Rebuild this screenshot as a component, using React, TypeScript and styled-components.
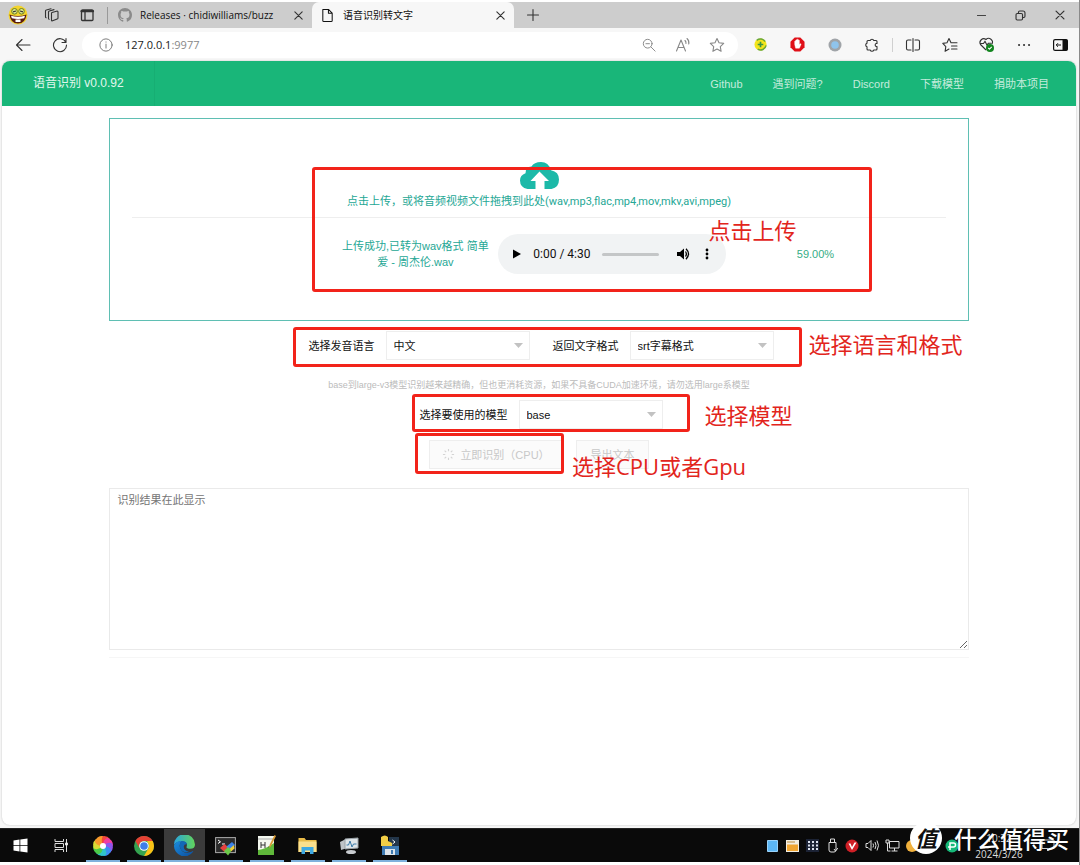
import React from "react";
import styled, { createGlobalStyle, css } from "styled-components";

const CJK = `"Noto Sans CJK SC", sans-serif`;
const RED = "#f2231a";

const GlobalStyle = createGlobalStyle`
  * { box-sizing: border-box; }
  body { margin: 0; background: #fff; font-family: "Liberation Sans", ${CJK}; font-size: 11px; line-height: 16px; color: #222; }
  button { font: inherit; color: inherit; background: none; border: 0; padding: 0; }
  svg { display: block; flex: none; }
`;

/* ---------- window ---------- */
const Window = styled.div`
  min-height: 100vh;
  display: flex;
  flex-direction: column;
  border-right: 1px solid #8a8a8a;
  padding: 2px 0 3px;
`;
const chromeFont = css`
  font-family: "Open Sans", ${CJK};
`;
const TabBar = styled.div`
  ${chromeFont}
  height: 26px;
  display: flex;
  align-items: center;
  background: #cdcdcd;
  font-size: 10px;
`;
const IconButton = styled.button<{ $w?: number; $color?: string }>`
  width: ${(p) => p.$w ?? 37}px;
  height: 26px;
  flex: none;
  display: flex;
  align-items: center;
  justify-content: center;
  color: ${(p) => p.$color ?? "#333"};
`;
const Separator = styled.span<{ $light?: boolean }>`
  width: 1px;
  height: ${(p) => (p.$light ? 14 : 17)}px;
  flex: none;
  background: ${(p) => (p.$light ? "#d0d0d0" : "#999")};
`;
const Tab = styled.div<{ $active?: boolean }>`
  position: relative;
  width: 202px;
  height: 26px;
  padding: 0 5px 0 8px;
  display: flex;
  align-items: center;
  gap: 8px;
  color: #111;
  border-radius: 7px 7px 0 0;
  background: ${(p) => (p.$active ? "#f7f7f7" : "transparent")};
`;
const TabTitle = styled.span`
  flex: 1;
  white-space: nowrap;
`;
const Spacer = styled.span`
  flex: 1;
`;
const Toolbar = styled.div`
  ${chromeFont}
  height: 33px;
  display: flex;
  align-items: center;
  padding: 0 0 0 4px;
  background: #f7f7f7;
`;
const AddressBar = styled.div`
  flex: 1;
  height: 26px;
  margin-left: 4px;
  padding: 0 4px 0 17px;
  display: flex;
  align-items: center;
  background: #fff;
  border-radius: 13px;
  color: #777;
`;
const AddressText = styled.div`
  flex: 1;
  margin-left: 12px;
  font-size: 11px;
  color: #888;
  b {
    font-weight: 400;
    color: #222;
  }
`;

/* ---------- page ---------- */
const Viewport = styled.div`
  flex: 1;
  display: flex;
  flex-direction: column;
  background: #f7f7f7;
  padding: 0 3px 3px 2px;
`;
const Page = styled.div`
  flex: 1;
  display: flex;
  flex-direction: column;
  background: #fff;
  border-radius: 8px;
  overflow: hidden;
  box-shadow: 0 0 2px #bbb;
`;
const Header = styled.header`
  height: 45px;
  display: flex;
  align-items: center;
  background: #19b679;
  color: rgba(255, 255, 255, 0.75);
`;
const Brand = styled.a`
  width: 153px;
  padding-left: 31px;
  line-height: 45px;
  font-size: 12px;
  color: #e2f6ee;
  text-decoration: none;
  border-right: 1px solid #17ae73;
`;
const Nav = styled.nav`
  margin-left: auto;
  padding-right: 27px;
  display: flex;
  gap: 30px;
  a {
    color: inherit;
    text-decoration: none;
  }
`;
const Content = styled.main`
  width: 80%;
  margin: 12px auto 0;
  display: flex;
  flex-direction: column;
  align-items: center;
`;
const UploadBox = styled.section`
  position: relative;
  width: 100%;
  min-height: 203px;
  padding: 43px 22px 0;
  border: 1px solid #5fbfb3;
  color: #25a795;
  display: flex;
  flex-direction: column;
  align-items: center;
`;
const UploadPrompt = styled.p`
  margin: 5px 0 7px;
  font-family: Roboto, ${CJK};
`;
const Divider = styled.hr`
  width: 100%;
  margin: 0;
  border: 0;
  border-top: 1px solid #eee;
`;
const UploadStatus = styled.div`
  width: 100%;
  margin-top: 16px;
  display: grid;
  grid-template-columns: minmax(0, 45fr) minmax(0, 28fr) minmax(0, 22fr) minmax(0, 5fr);
  align-items: center;
`;
const StatusMessage = styled.p`
  width: 150px;
  margin: 0 8px 0 0;
  justify-self: end;
  text-align: center;
`;
const Percent = styled.span`
  justify-self: center;
  color: #35ad85;
`;
const Player = styled.div`
  height: 40px;
  padding: 0 7px 0 13px;
  display: flex;
  align-items: center;
  border-radius: 20px;
  background: #f1f3f4;
  color: #111;
  font-family: Roboto, sans-serif;
  font-size: 12px;
`;
const PlayerTime = styled.span`
  margin: 0 11px 0 10px;
  white-space: nowrap;
`;
const Seek = styled.input`
  flex: 1;
  min-width: 0;
  height: 3px;
  margin: 0 12px 0 0;
  appearance: none;
  border-radius: 2px;
  background: #c4c6c7;
  &::-webkit-slider-thumb {
    appearance: none;
    width: 0;
    height: 0;
  }
`;
const FormRow = styled.div<{ $top: number; $gap?: number }>`
  position: relative;
  margin-top: ${(p) => p.$top}px;
  display: flex;
  align-items: center;
  gap: ${(p) => p.$gap ?? 23}px;
`;
const SelectRow = styled(FormRow)`
  padding-left: 4px;
`;
const Field = styled.label`
  display: flex;
  align-items: center;
  gap: 11px;
  color: #111;
  white-space: nowrap;
`;
const SelectWrap = styled.span`
  display: flex;
  align-items: center;
  width: 144px;
  height: 29px;
  border: 1px solid #eee;
  padding-right: 6px;
  background: #fff;
`;
const Select = styled.select`
  flex: 1;
  height: 27px;
  padding: 0 7px;
  appearance: none;
  border: 0;
  background: transparent;
  color: #111;
  font: inherit;
`;
const Hint = styled.p`
  margin: 17px 0 0;
  font-size: 9px;
  color: #bbb;
`;
const ActionButton = styled.button<{ $w: number }>`
  width: ${(p) => p.$w}px;
  height: 29px;
  display: flex;
  align-items: center;
  justify-content: center;
  gap: 5px;
  background: #fbfbfb;
  border: 1px solid #eee;
  color: #c8c8c8;
`;
const Result = styled.textarea`
  display: block;
  width: 100%;
  height: 162px;
  margin-top: 19px;
  padding: 3px 7px;
  border: 1px solid #eaeaea;
  font: inherit;
  resize: vertical;
  &::placeholder {
    color: #757575;
  }
`;
const Footline = styled(Divider)`
  margin-top: 7px;
  border-color: #f6f6f6;
`;

/* ---------- annotations over the page ---------- */
const Mark = styled.span<{ $x: number; $y: number; $w: number; $h: number }>`
  position: absolute;
  left: ${(p) => p.$x}px;
  top: ${(p) => p.$y}px;
  width: ${(p) => p.$w}px;
  height: ${(p) => p.$h}px;
  border: 3px solid ${RED};
  border-radius: 3px;
  pointer-events: none;
`;
const Note = styled.span<{ $x: number; $y: number }>`
  position: absolute;
  left: ${(p) => p.$x}px;
  top: ${(p) => p.$y}px;
  font: 22px/28px "Open Sans", ${CJK};
  color: #e2251c;
  white-space: nowrap;
  pointer-events: none;
`;

/* ---------- taskbar ---------- */
const Taskbar = styled.footer`
  position: relative;
  height: 34px;
  display: flex;
  background: #0a0a0a;
  border-top: 1px solid #222;
  color: #ddd;
`;
const TaskButton = styled.button<{ $running?: boolean; $active?: boolean }>`
  width: 41px;
  height: 33px;
  display: flex;
  align-items: center;
  justify-content: center;
  background: ${(p) =>
    p.$running
      ? `linear-gradient(#7fb2dd, #7fb2dd) center bottom / ${p.$active ? 41 : 34}px 2px no-repeat`
      : "none"};
  background-color: ${(p) => (p.$active ? "#3b3b3b" : "transparent")};
`;
const Tray = styled.div`
  margin-left: auto;
  display: flex;
  align-items: center;
`;
const TrayItem = styled.span`
  width: 20px;
  display: flex;
  justify-content: center;
`;
const Clock = styled.time`
  ${chromeFont}
  width: 74px;
  text-align: center;
  font-size: 10px;
`;
const ClockLine = styled.span`
  display: block;
  line-height: 16px;
`;
const NoticeSlot = styled.span`
  width: 43px;
  padding-left: 5px;
`;
const Watermark = styled.div`
  position: absolute;
  right: 10px;
  top: -7px;
  display: flex;
  align-items: center;
  gap: 12px;
  color: #fff;
  font: 500 23px/32px ${CJK};
`;
const Seal = styled.span`
  width: 32px;
  height: 32px;
  border-radius: 50%;
  background: #fff;
  color: #111;
  text-align: center;
  font-size: 22px;
  font-weight: 700;
  font-style: italic;
  line-height: 31px;
`;

/* ---------- icons ---------- */
type LineProps = { size?: number; sw?: number; children: React.ReactNode };
const Line = ({ size = 16, sw = 1.1, children }: LineProps) => (
  <svg width={size} height={size} viewBox="0 0 16 16" fill="none" stroke="currentColor" strokeWidth={sw} strokeLinecap="round" strokeLinejoin="round">
    {children}
  </svg>
);
const CloseIcon = ({ size = 13 }: { size?: number }) => <Line size={size} sw={1.4}><path d="M3.5 3.5l9 9M12.5 3.5l-9 9" /></Line>;
const PlusIcon = () => <Line><path d="M8 2.5v11M2.5 8h11" /></Line>;
const SmileIcon = () => (
  <svg width="20" height="20" viewBox="0 0 20 20">
    <circle cx="10" cy="10" r="9.5" fill="#f3d42c" />
    <g fill="#dfe98a" stroke="#6b7d1c" strokeWidth="1">
      <circle cx="6.5" cy="6.3" r="2.800" /><circle cx="13.5" cy="6.3" r="2.800" />
    </g>
    <path d="M5 6.800l3-.8M12 6l3 .8" stroke="#333" strokeWidth="1.200" />
    <path d="M1.500 9.500q8.500 3 17 0q-1 9-8.500 9t-8.500-9z" fill="#5a1c10" />
    <path d="M3 10.800q7 2 14 0l-.8 2.400q-6.200 1.500-12.400 0z" fill="#fff" />
    <path d="M7.500 14.500h5v2.500h-5z" fill="#fff" />
  </svg>
);
const WorkspacesIcon = () => (
  <Line>
    <path d="M8 5.500l4.500-1.300q1.500-.2 1.500.8v6q0 .8-.8 1L8.500 13.800q-1 .2-1-.8V6.300q0-.6.5-.8z" />
    <path d="M5.200 12.300q-.7 0-.7-.9V5q0-.8.8-1L10 2.600" />
    <path d="M2.200 10.800q-.7 0-.7-.9V4q0-.8.8-1L7 1.700" />
  </Line>
);
const TabActionsIcon = () => (
  <Line sw={1.3}>
    <rect x="2.500" y="3" width="11.500" height="10.500" rx="1" /><path d="M2.500 4.200h11.500" strokeWidth="2.200" /><path d="M6 5v8" />
  </Line>
);
const GithubIcon = () => (
  <svg width="14" height="14" viewBox="0 0 16 16" fill="#8b8b8b">
    <path d="M8 0C3.580 0 0 3.580 0 8c0 3.540 2.290 6.530 5.470 7.590.4.070.550-.170.550-.380 0-.190-.010-.820-.010-1.490-2.010.370-2.530-.490-2.690-.940-.090-.230-.480-.940-.820-1.130-.280-.150-.680-.520-.010-.530.630-.010 1.080.580 1.230.820.720 1.210 1.870.870 2.330.660.070-.520.280-.870.510-1.070-1.780-.200-3.640-.890-3.640-3.950 0-.870.310-1.590.820-2.150-.080-.200-.360-1.020.080-2.120 0 0 .670-.210 2.200.820.640-.180 1.320-.270 2-.270s1.360.090 2 .270c1.530-1.040 2.200-.820 2.200-.820.440 1.100.160 1.920.080 2.120.510.560.820 1.270.820 2.150 0 3.070-1.870 3.750-3.650 3.950.290.250.540.730.540 1.480 0 1.070-.010 1.930-.010 2.200 0 .210.150.460.550.380A8.013 8.013 0 0 0 16 8c0-4.420-3.580-8-8-8z" />
  </svg>
);
const PageIcon = () => <Line size={15}><path d="M3 1.500h6l4 4v8q0 1-1 1H4q-1 0-1-1zM9 1.500v4h4" /></Line>;
const MinimizeIcon = () => <Line size={13}><path d="M3 8h10" /></Line>;
const RestoreIcon = () => (
  <Line size={13} sw={1.4}><rect x="2.500" y="5.500" width="8" height="8" rx="1.500" /><path d="M5.500 5.200V4q0-1.500 1.500-1.500h4q2.500 0 2.500 2.500v4q0 1.500-1.500 1.500h-1.300" /></Line>
);
const BackIcon = () => <Line><path d="M15 8H2M7 2.500L1.500 8 7 13.500" /></Line>;
const ReloadIcon = () => <Line><path d="M13.800 5.200A6.500 6.500 0 1 0 14.500 8M14 1.500v4h-4" /></Line>;
const InfoIcon = () => <Line size={14}><circle cx="8" cy="8" r="7" /><path d="M8 7v4.500M8 4.500v.2" /></Line>;
const ZoomOutIcon = () => <Line size={14}><circle cx="6.500" cy="6.500" r="5" /><path d="M10.300 10.300l4.700 4.700M4.500 6.500h4" /></Line>;
const ReadAloudIcon = () => (
  <Line><path d="M1.500 14L6 3l4.500 11M3 10.500h6" /><path d="M10 3.500q1.200 1.200 1 3M12 1.500q2.300 2 1.800 5.500" /></Line>
);
const STAR = "M8 1.500l2 4.300 4.700.6-3.400 3.200.8 4.700L8 12l-4.100 2.300.8-4.700L1.300 6.400 6 5.800z";
const StarIcon = () => <Line><path d={STAR} /></Line>;
const YellowExtIcon = () => (
  <svg width="13" height="13" viewBox="0 0 14 14">
    <circle cx="7" cy="7" r="6.500" fill="#f4e51b" />
    <path d="M3 2.500A6 6 0 0 1 12 4M13 8a6 6 0 0 1-9 4" fill="none" stroke="#69a83a" strokeWidth="1.600" />
    <path d="M7 4v6M4 7h6" stroke="#3c9446" strokeWidth="1.800" />
  </svg>
);
const BlockerIcon = () => (
  <svg width="15" height="15" viewBox="0 0 16 16">
    <path d="M5 0.500h6L15.500 5v6L11 15.500H5L.5 11V5z" fill="#e01018" />
    <path d="M5 8V4.500q.7-.8 1.200 0V3.200q.7-.8 1.300 0v-.5q.7-.8 1.300 0v.8q.7-.8 1.200 0V8l1-.8q1-.2.800.7L10 12H6z" fill="#fff" stroke="#fff" strokeWidth=".4" />
  </svg>
);
const DotExtIcon = () => (
  <svg width="14" height="14" viewBox="0 0 14 14"><circle cx="7" cy="7" r="6.500" fill="#a0a4a8" /><circle cx="7" cy="7" r="3.800" fill="#8fc4ec" /></svg>
);
const PuzzleIcon = () => (
  <Line><path d="M4 3.500h2.200a1.900 1.900 0 0 1 3.600 0H12q1 0 1 1v2h-.8a1.600 1.600 0 0 0 0 3h.8v2.500q0 1-1 1H9.800a1.900 1.900 0 0 1-3.600 0H4q-1 0-1-1V9.800a1.900 1.900 0 0 1 0-3.600V4.500q0-1 1-1z" /></Line>
);
const SplitIcon = () => (
  <Line><path d="M6 3H3Q1.500 3 1.500 4.500v7Q1.500 13 3 13h3M10 3h3q1.500 0 1.500 1.500v7q0 1.500-1.500 1.500h-3M8 1.500v13" /></Line>
);
const FavoritesIcon = () => (
  <Line><path d="M9 5.800L7 1.500 5 5.800.8 6.400l3 3.200-.7 4.700L7 12M9 5.800h6M9.500 9H15M9.500 12H15" /></Line>
);
const HealthIcon = () => (
  <svg width="17" height="17" viewBox="0 0 17 17" fill="none" stroke="#333" strokeWidth="1.100" strokeLinejoin="round">
    <path d="M8 14L2.500 8.500a3.800 3.800 0 0 1 5.500-5 3.800 3.800 0 0 1 6 4.500M2.500 7.500h3l1.500-2.300 2 4 1.500-2h3" />
    <circle cx="12" cy="12" r="4" fill="#13851f" stroke="none" /><path d="M10.300 12l1.200 1.200 2.200-2.300" stroke="#fff" />
  </svg>
);
const MoreIcon = () => <Line><path d="M3 8h.1M8 8h.1M13 8h.1" strokeWidth="2" /></Line>;
const SidebarIcon = () => (
  <svg width="15" height="12" viewBox="0 0 15 12"><rect x=".6" y=".6" width="13.800" height="10.800" rx="1.500" fill="none" stroke="#111" strokeWidth="1.200" /><path d="M9.500.5h4q1 0 1 1v9q0 1-1 1h-4z" fill="#111" /><path d="M8 6H3.500M5 4.200L3.200 6 5 7.800" fill="none" stroke="#111" /></svg>
);
const CloudIcon = () => (
  <svg width="39" height="27" viewBox="0 0 39 27">
    <path d="M7.500 27Q0 25.500 0 18.500q0-5.500 5.500-7.300-.2-6.200 6-6.600Q14 0 21 0q7.500 0 10 8.200 8 1.600 8 9.300 0 8-7.500 9.500h-7v-8h4.500L19.500 9.500 10.500 19h5v8z" fill="#1cb9a8" />
  </svg>
);
const PlayIcon = () => <svg width="12" height="12" viewBox="0 0 12 12"><path d="M2 1.500v9L10 6z" fill="#000" /></svg>;
const VolumeIcon = () => (
  <svg width="14" height="14" viewBox="0 0 14 14"><path d="M1 5v4h3l4 3.500v-11L4 5z" /><path d="M9.500 4.500q1.700 2.500 0 5M10 1.800q5 5 0 10.400" fill="none" stroke="#000" strokeWidth="1.300" /></svg>
);
const KebabIcon = () => <svg width="4" height="12" viewBox="0 0 4 12"><circle cx="2" cy="2" r="1.400" /><circle cx="2" cy="6" r="1.400" /><circle cx="2" cy="10" r="1.400" /></svg>;
const Caret = () => <svg width="9" height="5" viewBox="0 0 9 5"><path d="M0 0h9L4.500 5z" fill="#c2c2c2" /></svg>;
const SpinnerIcon = () => (
  <svg width="13" height="13" viewBox="0 0 14 14" stroke="#d4d4d4" strokeWidth="1.200">
    <path d="M7 1v2.500M7 10.500v2.500M1 7h2.500M10.500 7h2.500M2.800 2.800l1.700 1.700M9.500 9.500l1.700 1.700M2.800 11.200l1.700-1.700M9.500 4.500l1.700-1.700" />
  </svg>
);

const WindowsIcon = () => <svg width="15" height="15" viewBox="0 0 15 15" fill="#fff"><path d="M.5 2.500L6.500 1.600V7h-6zM7.300 1.500L14.500.5V7H7.300zM.5 7.800h6v5.600l-6-.9zM7.300 7.800h7.200v6.700l-7.200-1z" /></svg>;
const TaskViewIcon = () => (
  <svg width="15" height="15" viewBox="0 0 15 15" fill="none" stroke="#ddd"><path d="M1 1v2.500h8.500V1M1 14v-2.500h8.500V14M1 5.500h8.500v4H1zM12.500 1v13" /><path d="M11.500 5h2v2h-2z" fill="#fff" /></svg>
);
const PetalIcon = () => (
  <svg width="20" height="20" viewBox="0 0 20 20">
    {["#f5483b", "#ef3fa0", "#8f55ee", "#3a8df2", "#2fc5c9", "#4ccb48", "#d9dc35", "#f79a2c"].map((c, i) => (
      <path key={c} d="M10 10Q5 5 7.500.8 13.500-1.300 17 3 13 3.500 10 10z" fill={c} transform={`rotate(${i * 45} 10 10)`} />
    ))}
    <circle cx="10" cy="10" r="3" fill="#fff" />
  </svg>
);
const ChromeIcon = () => (
  <svg width="20" height="20" viewBox="0 0 20 20">
    <circle cx="10" cy="10" r="10" fill="#34a350" />
    <path d="M1.340 5A10 10 0 0 1 18.660 5H10a5 5 0 0 0-4.330 7.500z" fill="#e44134" />
    <path d="M18.660 5A10 10 0 0 1 10 20l4.330-7.500A5 5 0 0 0 14.300 7.500L13 5z" fill="#fbc116" />
    <circle cx="10" cy="10" r="4.800" fill="#fff" /><circle cx="10" cy="10" r="3.800" fill="#3f7ee8" />
  </svg>
);
const EdgeIcon = () => (
  <svg width="21" height="21" viewBox="0 0 20 20">
    <defs>
      <linearGradient id="edgeTop" x1="0" x2="1"><stop offset="0" stopColor="#2aa5e0" /><stop offset="1" stopColor="#62d45a" /></linearGradient>
      <linearGradient id="edgeLow" x1="0" x2="1" y2="1"><stop offset="0" stopColor="#1a8ee0" /><stop offset="1" stopColor="#0c4d9b" /></linearGradient>
    </defs>
    <path d="M0 9.500A10 10 0 0 1 20 9q0 4-4.500 4-4 0-3.500-1.800Q13.500 6.500 8 6 2 6 0 9.500z" fill="url(#edgeTop)" />
    <path d="M0 10Q2 5.500 7.500 5.800q-3.200 3-1.500 6.700 2.500 5.500 9 4 2-.5 3-1.200.6 0 .2.700A10 10 0 0 1 0 10z" fill="url(#edgeLow)" />
    <path d="M7.500 5.800q4 0 4.800 3-2.600-.6-3 2.200 0 4 5 5-6 1.500-8.300-3.500-1.700-3.700 1.500-6.700z" fill="#1269b8" />
  </svg>
);
const TerminalIcon = () => (
  <svg width="21" height="20" viewBox="0 0 21 20"><rect x=".6" y="1.600" width="19.800" height="15" fill="#2b2b2b" stroke="#aaa" /><path d="M3 4l2.500 1.800L3 7.500M7 8h3" stroke="#fff" fill="none" /><path d="M5 12l4.500-4 3.500 3-3.500 5z" fill="#e6423d" /><path d="M11.500 10.500L17 6l3 3-6 6z" fill="#3d83e8" /><path d="M9 15l4-4 4 3-4 5.500z" fill="#6bc948" /><path d="M15 12.500l4-3.500.5 3.500-3.500 3z" fill="#f1cf37" /></svg>
);
const NotepadIcon = () => (
  <svg width="19" height="21" viewBox="0 0 19 21"><path d="M1 1h16v19H1z" fill="#f4f8ef" /><path d="M1 15q8-1 16-7v12H1z" fill="#5fb83a" /><path d="M1 4h16" stroke="#aaa" /><path d="M4 7v6M4 10h4M8 7v6M11 12h.5" stroke="#333" /><path d="M17.500 0L19 1l-5 10-1.500 2V10z" fill="#d99a33" /></svg>
);
const FolderIcon = () => (
  <svg width="19" height="18" viewBox="0 0 19 18"><path d="M.5 1h6l1.500 2h10.500v12H.5z" fill="#e9bb48" /><path d="M.5 4.500h18V15H.5z" fill="#fbe08d" /><path d="M3.500 17v-7h12v7H12v-3.500H7V17z" fill="#3fa9e2" /></svg>
);
const MonitorIcon = () => (
  <svg width="20" height="19" viewBox="0 0 20 19"><path d="M1 6l6-3 5 8-10 3z" fill="#bfc4c8" /><path d="M6 3l13-1v10l-13 1z" fill="#dfe6ea" stroke="#9aa2a8" /><path d="M7.500 9h2l1.500-4 2 6 1.500-3h3" stroke="#3a7aa8" fill="none" /><ellipse cx="12" cy="16" rx="5" ry="2" fill="#c8ccd0" /></svg>
);
const PythonIcon = () => (
  <svg width="20" height="21" viewBox="0 0 20 21"><path d="M9 2h10v9H9z" fill="#23364a" /><path d="M12.500 5l2.500 2-2.500 2" stroke="#fff" fill="none" /><path d="M2 11h17v9H2z" fill="#3f7cb4" /><path d="M1 2q4-3 7 0v4l4 2v3H1z" fill="#f3cf46" /><path d="M5 14h10v6H5z" fill="#dde5ec" /><path d="M11 15h2v4h-2z" fill="#3f7cb4" /></svg>
);

const SquareTray = () => <svg width="11" height="12" viewBox="0 0 11 12"><path d="M.5.500h10v11H.5z" fill="#5cb6f4" stroke="#9ad3fa" /></svg>;
const WindowTray = () => <svg width="13" height="12" viewBox="0 0 13 12"><path d="M0 0h13v12H0z" fill="#f2ede2" /><path d="M1 4.500h11V11H1z" fill="#f0a532" /><path d="M1 2h8" stroke="#b98a3a" /></svg>;
const GridTray = () => (
  <svg width="13" height="13" viewBox="0 0 13 13"><path d="M0 0h13v13H0z" fill="#1c2335" /><g stroke="#dde3ef" strokeWidth="1.800" strokeDasharray="2 2"><path d="M2 3h10M2 6.500h10M2 10h10" /></g></svg>
);
const UsbTray = () => <svg width="11" height="15" viewBox="0 0 11 15" fill="none" stroke="#ddd"><path d="M3.500 1h4v3.500h-4zM2 4.500h7V12q0 2-2 2H4q-2 0-2-2z" /><path d="M7 11l1.500 2 2.500-3" /></svg>;
const RedTray = () => <svg width="14" height="14" viewBox="0 0 14 14"><circle cx="7" cy="7" r="6.500" fill="#cf1f26" /><path d="M3.500 4.500h2L7 8l2.500-4.500h2L7 11z" fill="#fff" /></svg>;
const SoundTray = () => <svg width="15" height="13" viewBox="0 0 15 13" fill="none" stroke="#ddd"><path d="M1 4.500h2l3-3v10l-3-3H1zM8 4.500q1 2 0 4M10 3q2 3.500 0 7M12 1.500q3 5 0 10" /></svg>;
const NetTray = () => <svg width="15" height="13" viewBox="0 0 15 13" fill="none" stroke="#ddd"><path d="M4.500 2.500h9.500v6.500H4.500zM6.500 12h6M9.500 9v3M1 1h3v3H1zM2.500 4v8h3" /></svg>;
const ShieldTray = () => <svg width="14" height="14" viewBox="0 0 14 14"><circle cx="7" cy="7" r="6" fill="#f0b03c" /></svg>;
const WandTray = () => <svg width="14" height="14" viewBox="0 0 14 14"><path d="M4 3l7 8" stroke="#ccc" /></svg>;
const GreenTray = () => <svg width="14" height="14" viewBox="0 0 14 14"><circle cx="7" cy="7" r="6.500" fill="#16b878" /><path d="M5 11V4h3.500q2 0 2 2t-2 2H3" fill="none" stroke="#fff" strokeWidth="1.500" /></svg>;
const NoticeIcon = () => <svg width="14" height="13" viewBox="0 0 14 13" fill="none" stroke="#ccc"><path d="M1 1h12v8.500H9l-2.500 2.500V9.500H1z" /></svg>;

const navLinks = ["Github", "遇到问题?", "Discord", "下载模型", "捐助本项目"];

const extensionButtons = [
  { label: "扩展 1", icon: <YellowExtIcon /> },
  { label: "扩展 2", icon: <BlockerIcon /> },
  { label: "扩展 3", icon: <DotExtIcon /> },
  { label: "扩展", icon: <PuzzleIcon /> },
];
const toolbarActions = [
  { label: "分屏", icon: <SplitIcon /> },
  { label: "收藏夹", icon: <FavoritesIcon /> },
  { label: "浏览器概要", icon: <HealthIcon /> },
  { label: "更多", icon: <MoreIcon /> },
  { label: "侧边栏", icon: <SidebarIcon /> },
];
const tasks = [
  { label: "开始", icon: <WindowsIcon /> },
  { label: "任务视图", icon: <TaskViewIcon /> },
  { label: "浏览器", icon: <PetalIcon />, running: true },
  { label: "Chrome", icon: <ChromeIcon />, running: true },
  { label: "Edge", icon: <EdgeIcon />, running: true, active: true },
  { label: "终端", icon: <TerminalIcon />, running: true },
  { label: "记事本", icon: <NotepadIcon />, running: true },
  { label: "资源管理器", icon: <FolderIcon />, running: true },
  { label: "监视器", icon: <MonitorIcon />, running: true },
  { label: "Python", icon: <PythonIcon />, running: true },
];
const trayIcons = [SquareTray, WindowTray, GridTray, UsbTray, RedTray, SoundTray, NetTray, ShieldTray, WandTray, GreenTray];

const SelectField = ({ label, value }: { label: string; value: string }) => (
  <Field>
    {label}
    <SelectWrap>
      <Select defaultValue={value}>
        <option>{value}</option>
      </Select>
      <Caret />
    </SelectWrap>
  </Field>
);

const BrowserChrome = () => (
  <>
    <TabBar>
      <IconButton $w={35} aria-label="用户"><SmileIcon /></IconButton>
      <IconButton $w={34} aria-label="工作区"><WorkspacesIcon /></IconButton>
      <IconButton $w={36} aria-label="标签操作"><TabActionsIcon /></IconButton>
      <IconButton as="span" $w={5}><Separator /></IconButton>
      <Tab>
        <GithubIcon />
        <TabTitle>Releases · chidiwilliams/buzz</TabTitle>
        <IconButton $w={18} aria-label="关闭"><CloseIcon /></IconButton>
      </Tab>
      <Tab $active>
        <PageIcon />
        <TabTitle>语音识别转文字</TabTitle>
        <IconButton $w={18} aria-label="关闭"><CloseIcon /></IconButton>
      </Tab>
      <IconButton aria-label="新建标签"><PlusIcon /></IconButton>
      <Spacer />
      <IconButton $w={39} aria-label="最小化"><MinimizeIcon /></IconButton>
      <IconButton $w={39} aria-label="还原"><RestoreIcon /></IconButton>
      <IconButton $w={39} aria-label="关闭窗口"><CloseIcon size={14} /></IconButton>
    </TabBar>
    <Toolbar>
      <IconButton aria-label="后退"><BackIcon /></IconButton>
      <IconButton aria-label="刷新"><ReloadIcon /></IconButton>
      <AddressBar>
        <InfoIcon />
        <AddressText><b>127.0.0.1</b>:9977</AddressText>
        <IconButton $w={34} $color="#888" aria-label="缩小"><ZoomOutIcon /></IconButton>
        <IconButton $w={34} $color="#888" aria-label="朗读"><ReadAloudIcon /></IconButton>
        <IconButton $w={34} $color="#888" aria-label="收藏"><StarIcon /></IconButton>
      </AddressBar>
      <IconButton as="span" $w={4} />
      {extensionButtons.map((b) => <IconButton key={b.label} aria-label={b.label}>{b.icon}</IconButton>)}
      <IconButton as="span" $w={4}><Separator $light /></IconButton>
      {toolbarActions.map((b) => <IconButton key={b.label} aria-label={b.label}>{b.icon}</IconButton>)}
    </Toolbar>
  </>
);

export default function App() {
  return (
    <Window>
      <GlobalStyle />
      <BrowserChrome />
      <Viewport>
        <Page>
          <Header>
            <Brand href="#">语音识别 v0.0.92</Brand>
            <Nav>{navLinks.map((n) => <a key={n} href="#">{n}</a>)}</Nav>
          </Header>
          <Content>
            <UploadBox>
              <CloudIcon />
              <UploadPrompt>点击上传，或将音频视频文件拖拽到此处(wav,mp3,flac,mp4,mov,mkv,avi,mpeg)</UploadPrompt>
              <Divider />
              <UploadStatus>
                <StatusMessage>上传成功,已转为wav格式 简单爱 - 周杰伦.wav</StatusMessage>
                <Player>
                  <button aria-label="播放"><PlayIcon /></button>
                  <PlayerTime>0:00 / 4:30</PlayerTime>
                  <Seek type="range" defaultValue={0} aria-label="进度" />
                  <IconButton $w={24} aria-label="音量"><VolumeIcon /></IconButton>
                  <IconButton $w={24} aria-label="更多选项"><KebabIcon /></IconButton>
                </Player>
                <Percent>59.00%</Percent>
              </UploadStatus>
              <Mark $x={202} $y={48} $w={560} $h={125} />
              <Note $x={598} $y={97}>点击上传</Note>
            </UploadBox>

            <SelectRow $top={10}>
              <SelectField label="选择发音语言" value="中文" />
              <SelectField label="返回文字格式" value="srt字幕格式" />
              <Mark $x={-12} $y={-4} $w={509} $h={40} />
              <Note $x={504} $y={-1}>选择语言和格式</Note>
            </SelectRow>

            <Hint>base到large-v3模型识别越来越精确，但也更消耗资源，如果不具备CUDA加速环境，请勿选用large系模型</Hint>

            <SelectRow $top={7}>
              <SelectField label="选择要使用的模型" value="base" />
              <Mark $x={-4} $y={-6} $w={278} $h={38} />
              <Note $x={289} $y={1}>选择模型</Note>
            </SelectRow>

            <FormRow $top={11} $gap={13}>
              <ActionButton $w={134} disabled><SpinnerIcon />立即识别（CPU）</ActionButton>
              <ActionButton $w={73} disabled>导出文本</ActionButton>
              <Mark $x={-14} $y={-7} $w={149} $h={41} />
              <Note $x={143} $y={12}>选择CPU或者Gpu</Note>
            </FormRow>

            <Result placeholder="识别结果在此显示" aria-label="识别结果" />
            <Footline />
          </Content>
        </Page>
      </Viewport>
      <Taskbar>
        {tasks.map((t) => (
          <TaskButton key={t.label} $running={t.running} $active={t.active} aria-label={t.label}>{t.icon}</TaskButton>
        ))}
        <Tray>
          {trayIcons.map((Icon, i) => <TrayItem key={i}><Icon /></TrayItem>)}
          <Clock>
            <ClockLine>10:32</ClockLine>
            <ClockLine>2024/3/26</ClockLine>
          </Clock>
          <NoticeSlot><NoticeIcon /></NoticeSlot>
        </Tray>
        <Watermark>
          <Seal>值</Seal>
          <span>什么值得买</span>
        </Watermark>
      </Taskbar>
    </Window>
  );
}
